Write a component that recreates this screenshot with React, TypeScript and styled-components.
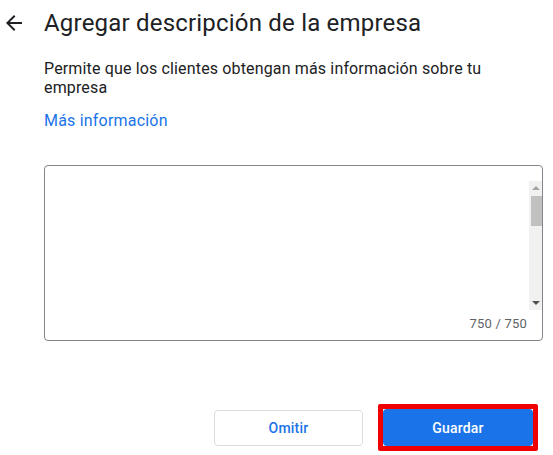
import React from "react";
import styled, { createGlobalStyle } from "styled-components";

const GlobalStyle = createGlobalStyle`
  html, body {
    margin: 0;
    padding: 0;
    background: #ffffff;
    font-family: Roboto, "Liberation Sans", Arial, sans-serif;
    color: #202124;
  }
`;

const Page = styled.div`
  width: 553px;
  padding-top: 7px;
  box-sizing: border-box;
`;

const Header = styled.header`
  display: flex;
  align-items: center;
  height: 32px;
`;

const BackButton = styled.button`
  width: 44px;
  height: 32px;
  padding: 0 0 0 2px;
  margin: 0;
  border: none;
  background: transparent;
  display: flex;
  align-items: center;
  justify-content: flex-start;
  color: #202124;
  cursor: pointer;
`;

const Title = styled.h1`
  margin: 0;
  font-size: 24px;
  line-height: 32px;
  font-weight: 400;
  letter-spacing: 0.2px;
  color: #202124;
  white-space: nowrap;
`;

const Content = styled.main`
  margin-left: 44px;
  width: 499px;
  display: flex;
  flex-direction: column;
`;

const Description = styled.p`
  margin: 20px 0 0;
  font-size: 16px;
  line-height: 19px;
  letter-spacing: 0.15px;
  color: #202124;
`;

const Link = styled.a`
  margin-top: 12px;
  font-size: 16px;
  line-height: 24px;
  letter-spacing: 0.2px;
  color: #1a73e8;
  text-decoration: none;
  align-self: flex-start;
`;

const TextBox = styled.div`
  margin-top: 32px;
  height: 176px;
  box-sizing: border-box;
  border: 1px solid #80868b;
  border-radius: 4px;
  display: flex;
  flex-direction: column;
`;

const TextRow = styled.div`
  display: flex;
  flex-direction: row;
`;

const Field = styled.div`
  flex: 1;
`;

const Scrollbar = styled.div`
  margin-top: 15px;
  width: 13px;
  height: 129px;
  background: #f1f1f1;
  display: flex;
  flex-direction: column;
  align-items: center;
`;

const Arrow = styled.div<{ $down?: boolean; $color: string }>`
  width: 0;
  height: 0;
  border-left: 4px solid transparent;
  border-right: 4px solid transparent;
  ${(p) =>
    p.$down
      ? `border-top: 4px solid ${p.$color};`
      : `border-bottom: 4px solid ${p.$color};`}
`;

const ArrowSlot = styled.div`
  height: 14px;
  width: 100%;
  display: flex;
  align-items: center;
  justify-content: center;
`;

const Track = styled.div`
  flex: 1;
  width: 100%;
  display: flex;
  flex-direction: column;
  align-items: flex-end;
`;

const Thumb = styled.div`
  margin-top: 1px;
  width: 11px;
  height: 30px;
  background: #c1c1c1;
`;

const Counter = styled.div`
  margin-top: 5px;
  padding-right: 15px;
  text-align: right;
  font-size: 13px;
  line-height: 17px;
  letter-spacing: 0.2px;
  color: #5f6368;
`;

const Actions = styled.div`
  margin-top: 63px;
  display: flex;
  justify-content: flex-end;
  align-items: center;
  gap: 15px;
  padding-right: 15px;
`;

const Button = styled.button<{ $primary?: boolean }>`
  width: ${(p) => (p.$primary ? "150px" : "149px")};
  height: ${(p) => (p.$primary ? "37px" : "36px")};
  box-sizing: border-box;
  border-radius: 4px;
  font-family: Roboto, "Liberation Sans", Arial, sans-serif;
  font-size: 14px;
  font-weight: 500;
  letter-spacing: 0.2px;
  cursor: pointer;
  border: ${(p) => (p.$primary ? "none" : "1px solid #dadce0")};
  background: ${(p) => (p.$primary ? "#1a73e8" : "#ffffff")};
  color: ${(p) => (p.$primary ? "#ffffff" : "#1a73e8")};
`;

const Highlight = styled.div`
  border: 5px solid #f00000;
  border-radius: 2px;
  display: flex;
`;

export default function App() {
  return (
    <>
      <GlobalStyle />
      <Page>
        <Header>
          <BackButton aria-label="Atrás">
            <svg width="24" height="24" viewBox="0 0 24 24" fill="currentColor">
              <path d="M20 11H7.83l5.59-5.59L12 4l-8 8 8 8 1.41-1.41L7.83 13H20v-2z" />
            </svg>
          </BackButton>
          <Title>Agregar descripción de la empresa</Title>
        </Header>
        <Content>
          <Description>
            Permite que los clientes obtengan más información sobre tu empresa
          </Description>
          <Link href="#">Más información</Link>
          <TextBox>
            <TextRow>
              <Field />
              <Scrollbar>
                <ArrowSlot>
                  <Arrow $color="#a3a3a3" />
                </ArrowSlot>
                <Track>
                  <Thumb />
                </Track>
                <ArrowSlot>
                  <Arrow $down $color="#505050" />
                </ArrowSlot>
              </Scrollbar>
            </TextRow>
            <Counter>750 / 750</Counter>
          </TextBox>
        </Content>
        <Actions>
          <Button>Omitir</Button>
          <Highlight>
            <Button $primary>Guardar</Button>
          </Highlight>
        </Actions>
      </Page>
    </>
  );
}
